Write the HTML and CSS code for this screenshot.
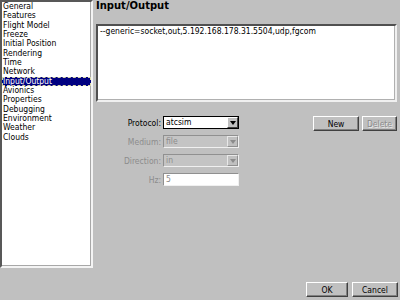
FILE: index.html
```html
<!DOCTYPE html>
<html lang="en">
<head>
    <meta charset="UTF-8">
    <title>Properties - Input/Output</title>
    <link rel="stylesheet" href="styles.css">
</head>
<body>

    <div class="dialog">
        <div class="main">
            <!-- Category list -->
            <ul class="tree">
                <li>General</li>
                <li>Features</li>
                <li>Flight Model</li>
                <li>Freeze</li>
                <li>Initial Position</li>
                <li>Rendering</li>
                <li>Time</li>
                <li>Network</li>
                <li class="selected">Input/Output</li>
                <li>Avionics</li>
                <li>Properties</li>
                <li>Debugging</li>
                <li>Environment</li>
                <li>Weather</li>
                <li>Clouds</li>
            </ul>

            <!-- Input/Output page -->
            <div class="panel">
                <h1 class="title">Input/Output</h1>
                <div class="text-box">--generic=socket,out,5.192.168.178.31.5504,udp,fgcom</div>

                <div class="form">
                    <div class="fields">
                        <label>Protocol:</label>
                        <div class="combo">
                            <span class="combo-value">atcsim</span>
                            <span class="combo-arrow"></span>
                        </div>

                        <label class="disabled">Medium:</label>
                        <div class="combo is-disabled">
                            <span class="combo-value">file</span>
                            <span class="combo-arrow"></span>
                        </div>

                        <label class="disabled">Direction:</label>
                        <div class="combo is-disabled">
                            <span class="combo-value">in</span>
                            <span class="combo-arrow"></span>
                        </div>

                        <label class="disabled">Hz:</label>
                        <div class="field">5</div>
                    </div>

                    <div class="actions">
                        <button class="btn btn-new">New</button>
                        <button class="btn btn-delete" disabled>Delete</button>
                    </div>
                </div>
            </div>
        </div>

        <div class="footer">
            <button class="btn btn-ok">OK</button>
            <button class="btn btn-cancel">Cancel</button>
        </div>
    </div>

</body>
</html>
```

FILE: styles.css
```css
/* Base styling */
body {
    margin: 0;
    background-color: #c0c0c0;
    font-family: "DejaVu Sans Condensed", "DejaVu Sans", sans-serif;
    font-size: 8.5px;
    color: #000;
}

.dialog {
    width: 400px;
    height: 300px;
    display: flex;
    flex-direction: column;
}

.main {
    display: flex;
    height: 268px;
}

/* Category list */
.tree {
    list-style: none;
    margin: 0;
    padding: 0;
    width: 93px;
    height: 268px;
    box-sizing: border-box;
    background-color: #fff;
    border: 2px solid;
    border-color: #585858 #f4f4f4 #f4f4f4 #585858;
    box-shadow: inset -1px -1px 0 #a8a8a8;
}

.tree li {
    height: 9.35px;
    line-height: 9.35px;
    padding-left: 1px;
    white-space: nowrap;
}

.tree li.selected {
    background-color: #000080;
    color: #fff;
    outline: 1px dashed #d8d8a8;
    outline-offset: -1px;
}

/* Right page */
.panel {
    flex: 1;
    padding: 0 3px;
}

.title {
    margin: 0;
    height: 12px;
    font-family: "DejaVu Sans", sans-serif;
    font-size: 10px;
    font-weight: bold;
    line-height: 12px;
}

.text-box {
    margin-top: 12px;
    height: 78px;
    box-sizing: border-box;
    padding: 0 2px;
    line-height: 10px;
    background-color: #fff;
    border: 2px solid;
    border-color: #505050 #f0f0f0 #f0f0f0 #505050;
    box-shadow: inset -1px -1px 0 #b0b0b0;
    white-space: nowrap;
}

.form {
    display: flex;
    align-items: flex-start;
    margin-top: 14px;
}

.fields {
    display: grid;
    grid-template-columns: 65px 76px;
    column-gap: 2px;
    row-gap: 6px;
    align-items: center;
}

.fields label {
    text-align: right;
}

.fields label.disabled {
    color: #8c8c8c;
}

/* Combo boxes */
.combo {
    display: flex;
    height: 13px;
    box-sizing: border-box;
    background-color: #fff;
    border: 1px solid #000;
}

.combo-value {
    flex: 1;
    padding-left: 2px;
    line-height: 11px;
}

.combo-arrow {
    width: 11px;
    box-sizing: border-box;
    display: flex;
    align-items: center;
    justify-content: center;
    background-color: #c0c0c0;
    border: 1px solid;
    border-color: #fff #404040 #404040 #fff;
}

.combo-arrow::after {
    content: "";
    border-left: 3.5px solid transparent;
    border-right: 3.5px solid transparent;
    border-top: 4px solid #000;
}

.combo.is-disabled {
    background-color: #c4c4c4;
    border-color: #909090 #f0f0f0 #f0f0f0 #909090;
    color: #8c8c8c;
}

.combo.is-disabled .combo-arrow {
    border-color: #e8e8e8 #909090 #909090 #e8e8e8;
}

.combo.is-disabled .combo-arrow::after {
    border-top-color: #8c8c8c;
}

.field {
    height: 13px;
    box-sizing: border-box;
    padding-left: 2px;
    line-height: 11px;
    background-color: #fff;
    border: 1px solid;
    border-color: #909090 #f0f0f0 #f0f0f0 #909090;
    color: #8c8c8c;
}

/* Buttons */
.actions {
    display: flex;
    gap: 3px;
    margin-left: auto;
}

.btn {
    height: 15px;
    padding: 0;
    font: inherit;
    color: #000;
    background-color: #c0c0c0;
    border: 1px solid;
    border-color: #fff #404040 #404040 #fff;
    box-shadow: inset -1px -1px 0 #808080;
}

.btn:disabled {
    color: #8c8c8c;
    text-shadow: 1px 1px 0 #e8e8e8;
}

.btn-new { width: 46px; }
.btn-delete { width: 35px; }
.btn-ok { width: 42px; }
.btn-cancel { width: 46px; }

.footer {
    display: flex;
    justify-content: flex-end;
    gap: 4px;
    padding: 14px 2px 0 0;
}
```
